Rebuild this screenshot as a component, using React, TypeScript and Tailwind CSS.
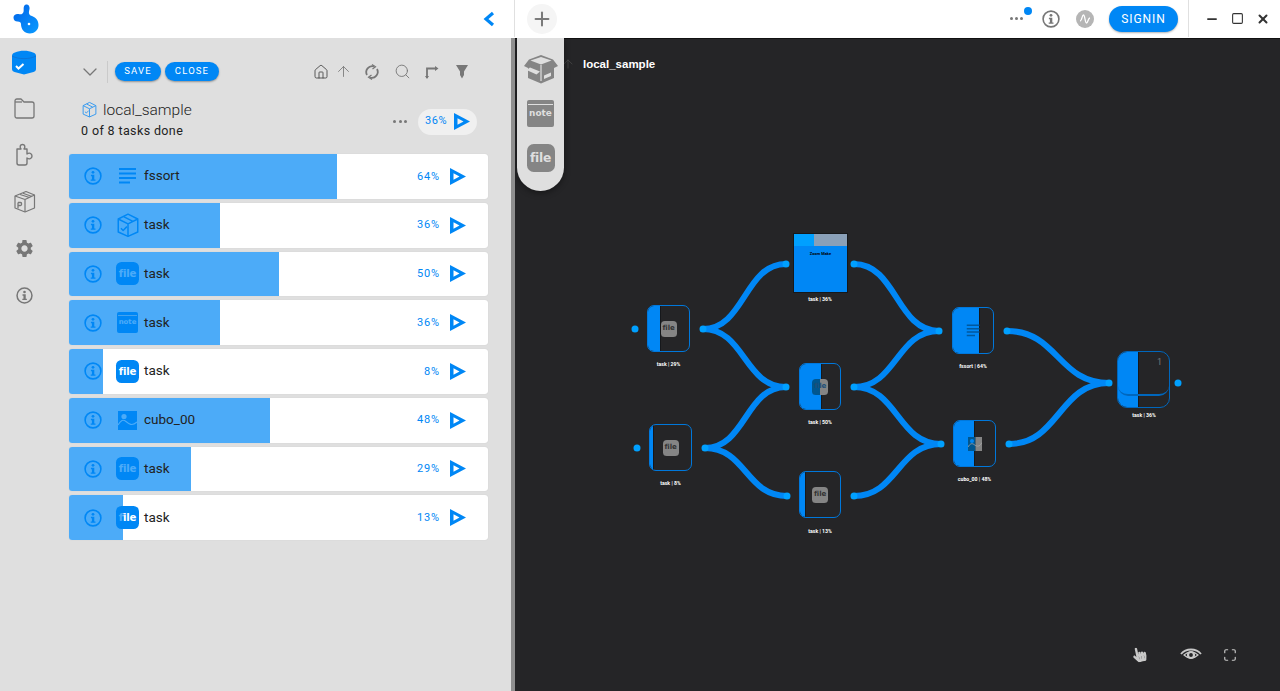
import { ArrowUp, ChevronDown, House, Maximize, Search, X, Minus, Square, Plus } from 'lucide-react';
import { FaHandPointer } from 'react-icons/fa';
import { MdSettings } from 'react-icons/md';
import type { ReactNode } from 'react';

const BLUE = '#0087f5';
const font = { fontFamily: 'Roboto, sans-serif' };

const InfoIcon = ({ size = 18, color = BLUE }: { size?: number; color?: string }) => (
  <svg width={size} height={size} viewBox="0 0 18 18" fill="none" className="shrink-0">
    <circle cx="9" cy="9" r="7.9" stroke={color} strokeWidth="1.6" />
    <circle cx="9" cy="5.3" r="1.4" fill={color} />
    <path d="M6.9 7.8h3.4v4.6h1.2v1.4H6.700v-1.400h1.200V9.200H6.900z" fill={color} />
  </svg>
);

const PlayIcon = ({ className = '' }: { className?: string }) => (
  <svg width="16" height="17" viewBox="0 0 16 17" className={`shrink-0 ${className}`}>
    <path d="M0 0 16 8.500 0 17ZM3.500 5.200V11.800L9.500 8.500Z" fill={BLUE} fillRule="evenodd" />
  </svg>
);

const FileIcon = ({ size = 23, bg = BLUE, fg = '#fff' }: { size?: number; bg?: string; fg?: string }) => (
  <div
    className="flex shrink-0 items-center justify-center font-bold"
    style={{
      width: size,
      height: size,
      background: bg,
      color: fg,
      fontSize: size * 0.44,
      borderRadius: size * 0.24,
      fontFamily: '"DejaVu Sans", sans-serif',
      letterSpacing: '-0.02em',
    }}>
    file
  </div>
);

const NoteIcon = ({ size = 23, bg = BLUE, fg = '#fff' }: { size?: number; bg?: string; fg?: string }) => (
  <div
    className="relative flex shrink-0 items-center justify-center rounded-[2px] font-bold"
    style={{ width: size, height: size, background: bg, color: fg, fontSize: size * 0.33, fontFamily: '"DejaVu Sans", sans-serif' }}>
    <div className="absolute top-[15%] right-[3%] left-[3%] h-px bg-[#dfdfdf]" />
    note
  </div>
);

const ListIcon = ({ color = BLUE, size = 20 }: { color?: string; size?: number }) => (
  <svg width={size} height={size} viewBox="0 0 20 20" className="shrink-0">
    <path d="M1 2h17v2H1zM1 6.500h17v2H1zM1 11h17v2H1zM1 15.500h11v2H1z" fill={color} />
  </svg>
);

const ImageIcon = () => (
  <svg width="19" height="19" viewBox="0 0 19 19" className="shrink-0">
    <rect width="19" height="19" fill={BLUE} />
    <circle cx="6" cy="5.500" r="2.600" fill="#fff" />
    <path d="M0 14c3-5 5-6 8-3.500s6 5 11 .5" fill="none" stroke="#fff" strokeWidth="1.100" />
  </svg>
);

const SplitImageIcon = () => (
  <svg width="14" height="14" viewBox="0 0 14 14" className="shrink-0">
    <rect width="7.500" height="14" fill="#00568f" />
    <rect x="7.500" width="6.500" height="14" fill="#858585" />
    <circle cx="4" cy="4" r="2" fill={BLUE} />
    <path d="M0 10c2-3.500 4-4 6-2.500s5 3.500 8-2" fill="none" stroke="#aaa" strokeWidth=".8" />
  </svg>
);

const BoxIcon = ({ color = BLUE, size = 24 }: { color?: string; size?: number }) => (
  <svg width={size} height={size} viewBox="0 0 24 24" fill="none" stroke={color} strokeWidth="1.400" strokeLinejoin="round" className="shrink-0">
    <path d="M3 6.500 12 2l9 4.500v12L12 22.500 3 18.500z" />
    <path d="M3 6.500 12 11l9-4.500M12 11v11.500M8 4.200l8.500 4.500" />
    <path d="m5.500 15 2 2 3.500-3.500" />
  </svg>
);

const BigBox = () => (
  <svg width="36" height="30" viewBox="0 0 36 30">
    <path d="M18 1 6 5.500 1 12l4 2v10l13 5.500L31 24V14l4-2-5-6.500z" fill="#858585" />
    <path d="M7.500 6.500 18 10.500 28.500 6.500 18 3z" fill="#dfdfdf" />
    <path d="M18 11v16" stroke="#dfdfdf" strokeWidth="1.200" />
    <path d="M7 13.500 17 17.500 13.500 20.500 3.500 16z" fill="#dfdfdf" />
    <path d="M21 21.500 28 18.500v3.500l-7 3z" fill="#dfdfdf" />
  </svg>
);

const Logo = () => (
  <svg width="27" height="30" viewBox="0 0 27 30">
    <defs>
      <linearGradient id="lg" x1="0" y1="0" x2="1" y2="1">
        <stop offset="0" stopColor="#0062e8" />
        <stop offset="1" stopColor="#0a9bff" />
      </linearGradient>
    </defs>
    <path
      d="M12 1c3-1.500 5 1 4.500 4-.4 2.500-1.500 4.500 1 6.500 4 1 8 4 8 9.500 0 5.500-4.500 8.500-8.500 8.500-5.500 0-9-4-9-9.500 0-1.500-1-2.500-3.500-2.500C2 17.500.500 16 .500 13.500c0-2.500 2.500-4 5-3.500 2.500.5 4 .5 5-2 .5-2.500-.5-5.500 1.500-7z"
      fill="url(#lg)"
    />
    <circle cx="16" cy="20" r="1.300" fill="#fff" />
  </svg>
);

const ToolBtn = ({ children, w }: { children: ReactNode; w: string }) => (
  <button
    className={`flex h-[19px] ${w} items-center justify-center rounded-full bg-[#0087f5] text-[9.500px] tracking-[0.12em] text-white shadow-[0_1px_2px_rgba(0,0,0,0.35)]`}>
    {children}
  </button>
);

const tasks: { name: string; pct: number; icon: ReactNode }[] = [
  { name: 'fssort', pct: 64, icon: <ListIcon /> },
  { name: 'task', pct: 36, icon: <BoxIcon size={26} /> },
  { name: 'task', pct: 50, icon: <FileIcon /> },
  { name: 'task', pct: 36, icon: <NoteIcon size={21} /> },
  { name: 'task', pct: 8, icon: <FileIcon /> },
  { name: 'cubo_00', pct: 48, icon: <ImageIcon /> },
  { name: 'task', pct: 29, icon: <FileIcon /> },
  { name: 'task', pct: 13, icon: <FileIcon /> },
];

const TaskRow = ({ name, pct, icon }: { name: string; pct: number; icon: ReactNode }) => (
  <div className="relative flex h-[44.750px] items-center overflow-hidden rounded-[3px] bg-white pl-[15px] shadow-[0_0_1px_rgba(0,0,0,0.15)]">
    <InfoIcon />
    <div className="ml-[14px] flex w-[23px] justify-center">{icon}</div>
    <span className="relative z-10 mb-[2px] ml-[5px] text-[13.500px] text-[#222]">{name}</span>
    <span className="mt-[1px] ml-auto text-[11px] tracking-[0.08em] text-[#0087f5]">{pct}%</span>
    <PlayIcon className="mr-[22px] ml-[10px]" />
    <div className="absolute inset-y-0 left-0 bg-[#0087f5]/70" style={{ width: `${pct}%` }} />
  </div>
);

const ORIGIN_X = 515;
const ORIGIN_Y = 38;

type NodeData = {
  x: number;
  y: number;
  w: number;
  h: number;
  fill: number;
  label: string;
  labelY: number;
  icon: ReactNode;
};

const grayFile = <FileIcon size={16} bg="#858585" fg="#333" />;

const nodes: NodeData[] = [
  { x: 647, y: 305, w: 43, h: 47, fill: 13, label: 'task | 29%', labelY: 365, icon: grayFile },
  {
    x: 799,
    y: 363,
    w: 42,
    h: 47,
    fill: 22,
    label: 'task | 50%',
    labelY: 423,
    icon: <FileIcon size={16} bg="linear-gradient(to right, #00568f 50%, #858585 50%)" fg="#1d4f78" />,
  },
  { x: 649, y: 424, w: 43, h: 47, fill: 4, label: 'task | 8%', labelY: 484, icon: grayFile },
  { x: 799, y: 471, w: 42, h: 47, fill: 6, label: 'task | 13%', labelY: 532, icon: grayFile },
  { x: 952, y: 307, w: 42, h: 47, fill: 27, label: 'fssort | 64%', labelY: 367, icon: <ListIcon color="#00589e" size={15} /> },
  { x: 953, y: 420, w: 43, h: 47, fill: 21, label: 'cubo_00 | 48%', labelY: 480, icon: <SplitImageIcon /> },
];

const NodeLabel = ({ cx, y, label }: { cx: number; y: number; label: string }) => (
  <div
    className="absolute -translate-x-1/2 -translate-y-1/2 text-[5.200px] font-bold whitespace-nowrap text-white"
    style={{ left: cx - ORIGIN_X, top: y - ORIGIN_Y }}>
    {label}
  </div>
);

const FlowNode = ({ x, y, w, h, fill, label, labelY, icon }: NodeData) => (
  <>
    <div
      className="absolute flex items-center justify-center overflow-hidden rounded-[7px] border-[1.500px] border-[#0078dc]"
      style={{ left: x - ORIGIN_X, top: y - ORIGIN_Y, width: w, height: h }}>
      <div className="absolute inset-y-0 left-0 border-r border-[#16181b] bg-[#0087f5]" style={{ width: fill }} />
      <div className="relative">{icon}</div>
    </div>
    <NodeLabel cx={x + w / 2} y={labelY} label={label} />
  </>
);

const edges = [
  [703, 329, 786, 264],
  [703, 329, 786, 387],
  [705, 448, 786, 387],
  [705, 448, 787, 496],
  [854, 264, 939, 331],
  [854, 387, 939, 331],
  [854, 387, 941, 444],
  [854, 496, 941, 444],
  [1007, 331, 1109, 383],
  [1009, 444, 1109, 383],
];

const dots = [
  [635, 329], [703, 329], [637, 448], [705, 448], [786, 264], [854, 264], [786, 387], [854, 387],
  [787, 496], [854, 496], [939, 331], [1007, 331], [941, 444], [1009, 444], [1109, 383], [1178, 383],
];

const FlowCanvas = () => (
  <div className="relative flex-1 overflow-hidden bg-[#252527] shadow-[inset_0_1px_0_#111]">
    <svg className="absolute inset-0" width="765" height="653" viewBox="515 38 765 653" fill="none">
      {edges.map(([x1, y1, x2, y2], i) => {
        const mx = (x1 + x2) / 2;
        return (
          <path
            key={i}
            d={`M${x1} ${y1}C${mx} ${y1} ${mx} ${y2} ${x2} ${y2}`}
            stroke={BLUE}
            strokeWidth="6"
            strokeLinecap="round"
          />
        );
      })}
      {dots.map(([cx, cy], i) => (
        <circle key={i} cx={cx} cy={cy} r="3.500" fill="#00a0ff" />
      ))}
    </svg>

    {nodes.map((n) => (
      <FlowNode key={n.label} {...n} />
    ))}

    {/* note node */}
    <div className="absolute top-[195px] left-[278px] h-[60px] w-[55px] border border-[#16181b] bg-[#0087f5]">
      <div className="flex h-[12px]">
        <div className="w-[20px] bg-[#00a0ff]" />
        <div className="flex-1 bg-[#8aa0b8]" />
      </div>
      <div className="mt-[5px] text-center text-[4px] font-bold text-black">Zoom Make</div>
    </div>
    <NodeLabel cx={820} y={300} label="task | 36%" />

    {/* output node */}
    <div className="absolute top-[313px] left-[602px] h-[57px] w-[53px] overflow-hidden rounded-[10px] border-[1.500px] border-[#0067bd]">
      <div className="absolute inset-y-0 left-0 w-[20px] bg-[#0087f5]" />
      <div className="absolute inset-y-0 left-[20px] w-px bg-[#16181b]" />
      <div className="absolute inset-x-0 top-0 h-[44px] rounded-[10px] border-b-2 border-[#0067bd]" />
      <div className="absolute top-[4px] right-[7px] text-[9px] text-[#777]">1</div>
    </div>
    <NodeLabel cx={1144} y={416} label="task | 36%" />

    {/* breadcrumb */}
    <ArrowUp size={14} strokeWidth={1} className="absolute top-[19px] left-[46px] text-[#555]" />
    <div className="absolute top-[18px] left-[68px] text-[11.500px] font-bold text-white" style={{ fontFamily: '"Liberation Sans", sans-serif' }}>
      local_sample
    </div>

    {/* add toolbox */}
    <div className="absolute top-0 left-[2px] flex h-[153px] w-[47px] flex-col items-center rounded-b-[24px] bg-[#dfdfdf] pt-[16px] shadow-[0_2px_6px_rgba(0,0,0,0.4)]">
      <BigBox />
      <div className="mt-[16px]">
        <NoteIcon size={27} bg="#858585" fg="#dfdfdf" />
      </div>
      <div className="mt-[17px]">
        <FileIcon size={28} bg="#858585" fg="#dfdfdf" />
      </div>
    </div>

    {/* view controls */}
    <div className="absolute right-[43px] bottom-[29px] flex items-center text-[#c8c8c8]">
      <FaHandPointer size={15} className="-rotate-12" />
      <svg width="22" height="14" viewBox="0 0 22 14" fill="none" className="ml-[33px]">
        <path d="M1 6c5-6 15-6 20 0" stroke="currentColor" strokeWidth="1.800" />
        <path d="M4 7c4-4 10-4 14 0-4 4-10 4-14 0z" stroke="currentColor" strokeWidth="1.200" />
        <circle cx="11" cy="7" r="3" stroke="currentColor" strokeWidth="2.200" />
      </svg>
      <Maximize size={14} strokeWidth={2} className="ml-[21px]" />
    </div>
  </div>
);

const sideIcons: ReactNode[] = [
  <svg key="box" width="26" height="26" viewBox="0 0 26 26" className="translate-y-[1px]">
    <path d="M1 7c0-2 1-3 3-3.500C9 1 17 1 22 3.500c2 .5 3 1.500 3 3.500v13c0 1.500-1 2.500-2.500 3L13 25.500 3.500 23C2 22.500 1 21.500 1 20z" fill={BLUE} />
    <path d="M1 7c6 3.500 18 3.500 24 0" stroke="#0f70cf" strokeWidth=".8" fill="none" />
    <path d="m5 17 2.500 2.500L12.500 15" stroke="#fff" strokeWidth="2" fill="none" />
  </svg>,
  <svg key="folder" width="21" height="21" viewBox="0 0 21 21" fill="none" stroke="#777" strokeWidth="1.300" strokeLinejoin="round">
    <path d="M1 3c0-1 .5-2 2-2h4l3 3h8c1 0 2 .5 2 2v12c0 1-.5 2-2 2H3c-1.500 0-2-1-2-2z" />
    <path d="M8 4H1" />
  </svg>,
  <svg key="puzzle" width="22" height="24" viewBox="0 0 22 24" fill="none" stroke="#777" strokeWidth="1.400" strokeLinejoin="round">
    <path d="M4 6h4c-1.500-2-1-4.500 1.500-4.500S12.500 4 11 6h3v5c2-1.500 5-1 5 2s-3 3.500-5 2v5c0 1-.5 2-2 2H6c-1.500 0-2-1-2-2z" />
  </svg>,
  <svg key="pkg" width="23" height="23" viewBox="0 0 23 23" fill="none" stroke="#777" strokeWidth="1.200" strokeLinejoin="round">
    <path d="M2 6 13 1.500 21.500 5v13L12 22 2 18z" />
    <path d="M2 6 12 9.500 21.500 5M12 9.500V22M7 4.500l9.500 3M10 3.200l9 3.300" />
    <path d="M5 12.500v6M5 12.500h2.500c1.500 0 1.500 3 0 3H5" strokeWidth="1.300" />
  </svg>,
  <MdSettings key="gear" size={21} className="text-[#777]" />,
  <InfoIcon key="info" size={17} color="#777" />,
];

export default function App() {
  return (
    <div className="flex h-screen w-screen flex-col overflow-hidden" style={font}>
      <header className="flex h-[38px] shrink-0 bg-white pb-[1px]">
        <div className="flex w-[515px] items-center justify-between border-r border-[#e0e0e0] pr-[19px] pl-[13px]">
          <Logo />
          <svg width="12" height="16" viewBox="0 0 12 16" fill="none">
            <path d="M10 2 3 8l7 6" stroke={BLUE} strokeWidth="3.200" />
          </svg>
        </div>
        <div className="flex flex-1 items-center pl-[12px]">
          <div className="flex h-[30px] w-[30px] items-center justify-center rounded-full bg-[#f5f5f5]">
            <Plus size={22} strokeWidth={2.200} className="text-[#7a7a7a]" />
          </div>
          <div className="relative ml-auto flex gap-[2px]">
            <span className="h-[3px] w-[3px] rounded-full bg-[#777]" />
            <span className="h-[3px] w-[3px] rounded-full bg-[#777]" />
            <span className="h-[3px] w-[3px] rounded-full bg-[#777]" />
            <span className="absolute -top-[10px] -right-[9px] h-[8px] w-[8px] rounded-full bg-[#0087f5]" />
          </div>
          <div className="ml-[19px]">
            <InfoIcon color="#777" />
          </div>
          <div className="ml-[16px] flex h-[18px] w-[18px] items-center justify-center rounded-full bg-[#b5b5b5]">
            <svg width="12" height="10" viewBox="0 0 12 10" fill="none">
              <path d="M1 7c2 0 2-6 3.500-6s1.500 8 3 8S9 4 11 4" stroke="#fff" strokeWidth="1.300" />
            </svg>
          </div>
          <button className="ml-[15px] h-[26px] w-[69px] rounded-full bg-[#0087f5] text-[12px] tracking-[0.08em] text-white shadow-[0_1px_2px_rgba(0,0,0,0.3)]">
            SIGNIN
          </button>
          <div className="ml-[10px] flex h-full items-center gap-[12px] border-l border-[#e0e0e0] pr-[10px] pl-[16px] text-[#333]">
            <Minus size={14} strokeWidth={3} />
            <Square size={13} strokeWidth={2} />
            <X size={14} strokeWidth={3.400} />
          </div>
        </div>
      </header>

      <main className="flex min-h-0 flex-1">
        <section className="flex w-[511px] shrink-0 bg-[#dfdfdf]">
          <nav className="flex w-[48px] shrink-0 flex-col items-center">
            {sideIcons.map((icon, i) => (
              <div key={i} className="flex h-[46.750px] w-full items-center justify-center">
                {icon}
              </div>
            ))}
          </nav>
          <div className="ml-[21px] w-[419px]">
            <div className="mt-[24px] flex h-[19px] items-center pr-[20px] pl-[9px] text-[#777]">
              <ChevronDown size={24} strokeWidth={1.300} />
              <div className="mr-[7px] ml-[5px] h-[22px] w-px bg-[#cacaca]" />
              <div className="flex gap-[4px]">
                <ToolBtn w="w-[46px]">SAVE</ToolBtn>
                <ToolBtn w="w-[54px]">CLOSE</ToolBtn>
              </div>
              <div className="ml-auto flex items-center">
                <House size={16} strokeWidth={1.300} className="text-[#444]" />
                <ArrowUp size={17} strokeWidth={1.200} className="ml-[6px]" />
                <svg width="16" height="16" viewBox="0 0 16 16" fill="none" stroke="#777" strokeWidth="1.800" className="ml-[12px]">
                  <path d="M3 11A6 6 0 0 1 10 2.400M13 5a6 6 0 0 1-7 8.600" />
                  <path d="m8 .5 3.500 2.200L8.500 5M8 15.500l-3.500-2.200L7.500 11" strokeWidth="1.200" />
                </svg>
                <Search size={17} strokeWidth={1.300} className="ml-[14px]" />
                <svg width="15" height="16" viewBox="0 0 15 16" fill="none" stroke="#777" strokeWidth="1.800" className="ml-[13px]">
                  <path d="M3 14V4.500h8" />
                  <path d="M11 2v5l3.500-2.500zM1 12h4l-2 3z" fill="#777" stroke="none" />
                </svg>
                <svg width="12" height="14" viewBox="0 0 12 14" className="ml-[17px]">
                  <path d="M0 0h12L8 6.500V10l-2 3.500-2-3.500V6.500z" fill="#777" />
                </svg>
              </div>
            </div>

            <div className="mt-[15px] flex h-[45px] items-center pr-[11px] pl-[12px]">
              <div>
                <div className="flex items-center text-[15.500px] leading-[24px] font-light text-[#222]">
                  <BoxIcon size={17} color="#3a9bef" />
                  <span className="ml-[5px]">local_sample</span>
                </div>
                <div className="text-[12.500px] leading-[18px] tracking-[0.03em] text-[#222]">0 of 8 tasks done</div>
              </div>
              <div className="mt-[6px] ml-auto flex gap-[2.500px]">
                <span className="h-[3px] w-[3px] rounded-full bg-[#777]" />
                <span className="h-[3px] w-[3px] rounded-full bg-[#777]" />
                <span className="h-[3px] w-[3px] rounded-full bg-[#777]" />
              </div>
              <div className="mt-[6px] ml-[11px] flex h-[26px] w-[59px] items-center rounded-full bg-[#f0f0f0] pl-[7px] text-[11px] tracking-[0.05em] text-[#0087f5]">
                36%
                <PlayIcon className="ml-[7px]" />
              </div>
            </div>

            <div className="mt-[13px] flex flex-col gap-[4px]">
              {tasks.map((t, i) => (
                <TaskRow key={i} {...t} />
              ))}
            </div>
          </div>
        </section>
        <div className="w-[4px] shrink-0 bg-[#8f8f8f]" />
        <FlowCanvas />
      </main>
    </div>
  );
}
